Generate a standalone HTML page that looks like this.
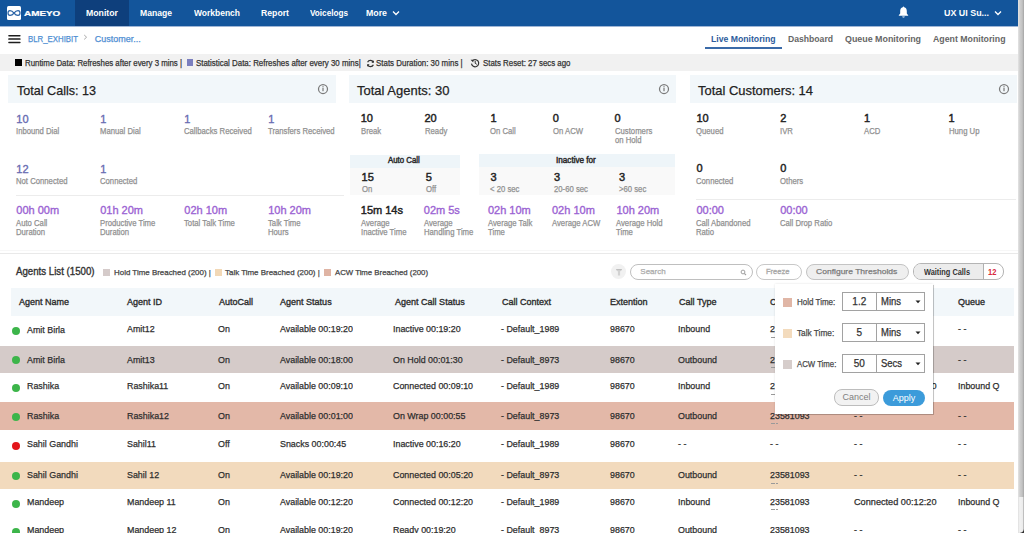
<!DOCTYPE html>
<html><head><meta charset="utf-8"><title>Ameyo Live Monitoring</title>
<style>
html,body{margin:0;padding:0;background:#fff;width:1024px;height:533px;overflow:hidden;position:relative;font-family:"Liberation Sans", sans-serif;}
.t{position:absolute;white-space:nowrap;transform-origin:0 0;}
.s{-webkit-text-stroke:0.25px currentColor;}
.m{-webkit-text-stroke:0.35px currentColor;}
.h{-webkit-text-stroke:0.45px currentColor;}
</style></head><body>
<div style="position:absolute;left:0px;top:0px;width:1018px;height:26px;background:#13559b;"></div>
<div style="position:absolute;left:75px;top:0px;width:54px;height:26px;background:#0e3f7c;"></div>
<div style="position:absolute;left:7px;top:6px;width:14px;height:14px;background:#fff;border-radius:1.5px"></div>
<svg style="position:absolute;left:7px;top:6px" width="14" height="14" viewBox="0 0 14 14"><path d="M7 7 C5.5 5 4 4.6 3 4.6 C1.7 4.6 1 5.8 1 7 C1 8.2 1.7 9.4 3 9.4 C4 9.4 5.5 9 7 7 C8.5 5 10 4.6 11 4.6 C12.3 4.6 13 5.8 13 7 C13 8.2 12.3 9.4 11 9.4 C10 9.4 8.5 9 7 7 Z" fill="none" stroke="#2a63a6" stroke-width="1.25"/></svg>
<span class="t" style="left:24.00px;top:10.79px;font-size:7.1px;line-height:7.1px;color:#fff;font-weight:700;-webkit-text-stroke:0.2px #fff;transform:scaleX(1.3953);">AMEYO</span>
<span class="t" style="left:86.00px;top:8.98px;font-size:9px;line-height:9px;color:#fff;font-weight:700;;transform:scaleX(0.9697);">Monitor</span>
<span class="t" style="left:140.00px;top:8.98px;font-size:9px;line-height:9px;color:#fff;font-weight:700;;transform:scaleX(0.9548);">Manage</span>
<span class="t" style="left:194.00px;top:8.98px;font-size:9px;line-height:9px;color:#fff;font-weight:700;;transform:scaleX(0.9418);">Workbench</span>
<span class="t" style="left:261.00px;top:8.98px;font-size:9px;line-height:9px;color:#fff;font-weight:700;;transform:scaleX(0.9655);">Report</span>
<span class="t" style="left:310.00px;top:8.98px;font-size:9px;line-height:9px;color:#fff;font-weight:700;;transform:scaleX(0.9078);">Voicelogs</span>
<span class="t" style="left:366.00px;top:8.98px;font-size:9px;line-height:9px;color:#fff;font-weight:700;;transform:scaleX(0.9760);">More</span>
<svg style="position:absolute;left:392px;top:10px" width="8" height="6" viewBox="0 0 8 6"><path d="M1 1.5 L4 4.5 L7 1.5" fill="none" stroke="#fff" stroke-width="1.3"/></svg>
<svg style="position:absolute;left:898px;top:6px" width="11" height="12" viewBox="0 0 11 12"><path d="M5.5 0.6 C5.9 0.6 6.2 0.9 6.2 1.3 C8 1.7 8.8 3.2 8.8 5 L8.8 7.6 L10.2 9.2 L10.2 9.8 L0.8 9.8 L0.8 9.2 L2.2 7.6 L2.2 5 C2.2 3.2 3 1.7 4.8 1.3 C4.8 0.9 5.1 0.6 5.5 0.6 Z M4.2 10.4 L6.8 10.4 C6.8 11.1 6.2 11.6 5.5 11.6 C4.8 11.6 4.2 11.1 4.2 10.4 Z" fill="#fff"/></svg>
<span class="t" style="left:944.00px;top:8.98px;font-size:9px;line-height:9px;color:#fff;font-weight:700;;transform:scaleX(0.9887);">UX UI Su...</span>
<svg style="position:absolute;left:994px;top:10px" width="8" height="6" viewBox="0 0 8 6"><path d="M1 1.5 L4 4.5 L7 1.5" fill="none" stroke="#fff" stroke-width="1.3"/></svg>
<div style="position:absolute;left:0px;top:26px;width:1018px;height:1px;background:#9fb6d6;"></div>
<svg style="position:absolute;left:0;top:30px" width="30" height="18" viewBox="0 30 30 18"><rect x="8.2" y="34.95" width="12.4" height="1.5" rx="0.7" fill="#1e1e1e"/><rect x="8.2" y="38.35" width="12.4" height="1.5" rx="0.7" fill="#1e1e1e"/><rect x="8.2" y="41.75" width="12.4" height="1.5" rx="0.7" fill="#1e1e1e"/></svg>
<span class="t s" style="left:28.00px;top:34.78px;font-size:9px;line-height:9px;color:#4f8fd3;font-weight:400;;transform:scaleX(0.8691);">BLR_EXHIBIT</span>
<svg style="position:absolute;left:83px;top:34px" width="5" height="7" viewBox="0 0 5 7"><path d="M1.2 1 L3.6 3.2 L1.2 5.4" fill="none" stroke="#aaa" stroke-width="1"/></svg>
<span class="t s" style="left:94.80px;top:34.78px;font-size:9px;line-height:9px;color:#4f8fd3;font-weight:400;;">Customer...</span>
<span class="t" style="left:711.30px;top:35.08px;font-size:9px;line-height:9px;color:#2d5c9c;font-weight:700;;transform:scaleX(0.9627);">Live Monitoring</span>
<div style="position:absolute;left:704.7px;top:47.3px;width:77px;height:1.8px;background:#3a6aa8;"></div>
<span class="t" style="left:787.80px;top:35.08px;font-size:9px;line-height:9px;color:#666;font-weight:700;;transform:scaleX(0.9571);">Dashboard</span>
<span class="t" style="left:845.00px;top:35.08px;font-size:9px;line-height:9px;color:#666;font-weight:700;;transform:scaleX(0.9870);">Queue Monitoring</span>
<span class="t" style="left:932.50px;top:35.08px;font-size:9px;line-height:9px;color:#666;font-weight:700;;transform:scaleX(0.9734);">Agent Monitoring</span>
<div style="position:absolute;left:0px;top:54px;width:1018px;height:16.5px;background:#f1f1f1;"></div>
<div style="position:absolute;left:15.2px;top:59px;width:6.8px;height:7px;background:#000;"></div>
<span class="t s" style="left:25.40px;top:59.40px;font-size:8.5px;line-height:8.5px;color:#333;font-weight:400;;transform:scaleX(0.9240);">Runtime Data: Refreshes after every 3 mins |</span>
<div style="position:absolute;left:186.5px;top:59px;width:6.9px;height:7px;background:#7b7fbf;"></div>
<span class="t s" style="left:196.00px;top:59.40px;font-size:8.5px;line-height:8.5px;color:#333;font-weight:400;;transform:scaleX(0.9304);">Statistical Data: Refreshes after every 30 mins|</span>
<svg style="position:absolute;left:365.5px;top:58.5px" width="9" height="9" viewBox="0 0 9 9"><path d="M7.3 3.3 A3.1 3.1 0 0 0 1.6 3.2 M1.7 5.7 A3.1 3.1 0 0 0 7.4 5.8" fill="none" stroke="#333" stroke-width="1.2"/><path d="M7.9 1.2 L7.9 3.8 L5.4 3.8 Z M1.1 7.8 L1.1 5.2 L3.6 5.2 Z" fill="#333"/></svg>
<span class="t s" style="left:376.40px;top:59.40px;font-size:8.5px;line-height:8.5px;color:#333;font-weight:400;;transform:scaleX(0.9320);">Stats Duration: 30 mins |</span>
<svg style="position:absolute;left:469.5px;top:58px" width="10" height="10" viewBox="0 0 10 10"><path d="M2.2 3 A3.6 3.6 0 1 1 1.5 5.6" fill="none" stroke="#333" stroke-width="1.2"/><path d="M0.6 1.8 L3.6 1.8 L3.2 4.4 Z" fill="#333"/><path d="M5.2 3 L5.2 5.3 L6.8 6.3" fill="none" stroke="#333" stroke-width="1"/></svg>
<span class="t s" style="left:483.00px;top:59.40px;font-size:8.5px;line-height:8.5px;color:#333;font-weight:400;;transform:scaleX(0.9259);">Stats Reset: 27 secs ago</span>
<div style="position:absolute;left:8px;top:75px;width:328px;height:28px;background:#f2f7fa;"></div>
<div style="position:absolute;left:349px;top:75px;width:327px;height:28px;background:#f2f7fa;"></div>
<div style="position:absolute;left:690px;top:75px;width:326.5px;height:28px;background:#f2f7fa;"></div>
<span class="t s" style="left:17.00px;top:83.57px;font-size:13.5px;line-height:13.5px;color:#222;font-weight:400;;transform:scaleX(0.9316);">Total Calls: 13</span>
<span class="t s" style="left:357.00px;top:83.57px;font-size:13.5px;line-height:13.5px;color:#222;font-weight:400;;transform:scaleX(0.9617);">Total Agents: 30</span>
<span class="t s" style="left:698.00px;top:83.57px;font-size:13.5px;line-height:13.5px;color:#222;font-weight:400;;transform:scaleX(0.9578);">Total Customers: 14</span>
<svg style="position:absolute;left:317px;top:83.3px" width="12" height="12" viewBox="0 0 12 12"><circle cx="6" cy="6" r="4.5" fill="none" stroke="#7a7a7a" stroke-width="1.25"/><rect x="5.4" y="5.0" width="1.2" height="3.2" fill="#777"/><rect x="5.4" y="3.2" width="1.2" height="1.2" fill="#777"/></svg>
<svg style="position:absolute;left:658px;top:83.3px" width="12" height="12" viewBox="0 0 12 12"><circle cx="6" cy="6" r="4.5" fill="none" stroke="#7a7a7a" stroke-width="1.25"/><rect x="5.4" y="5.0" width="1.2" height="3.2" fill="#777"/><rect x="5.4" y="3.2" width="1.2" height="1.2" fill="#777"/></svg>
<svg style="position:absolute;left:998.4px;top:83.3px" width="12" height="12" viewBox="0 0 12 12"><circle cx="6" cy="6" r="4.5" fill="none" stroke="#7a7a7a" stroke-width="1.25"/><rect x="5.4" y="5.0" width="1.2" height="3.2" fill="#777"/><rect x="5.4" y="3.2" width="1.2" height="1.2" fill="#777"/></svg>
<span class="t m" style="left:16.30px;top:113.69px;font-size:11px;line-height:11px;color:#686cb2;font-weight:400;;">10</span>
<span class="t s" style="left:16.30px;top:126.57px;font-size:8.3px;line-height:8.3px;color:#919191;font-weight:400;;transform:scaleX(0.9300);">Inbound Dial</span>
<span class="t m" style="left:100.20px;top:113.69px;font-size:11px;line-height:11px;color:#686cb2;font-weight:400;;">1</span>
<span class="t s" style="left:100.20px;top:126.57px;font-size:8.3px;line-height:8.3px;color:#919191;font-weight:400;;transform:scaleX(0.9300);">Manual Dial</span>
<span class="t m" style="left:184.30px;top:113.69px;font-size:11px;line-height:11px;color:#686cb2;font-weight:400;;">1</span>
<span class="t s" style="left:184.30px;top:126.57px;font-size:8.3px;line-height:8.3px;color:#919191;font-weight:400;;transform:scaleX(0.9300);">Callbacks Received</span>
<span class="t m" style="left:268.20px;top:113.69px;font-size:11px;line-height:11px;color:#686cb2;font-weight:400;;">1</span>
<span class="t s" style="left:268.20px;top:126.57px;font-size:8.3px;line-height:8.3px;color:#919191;font-weight:400;;transform:scaleX(0.9300);">Transfers Received</span>
<span class="t m" style="left:16.30px;top:163.79px;font-size:11px;line-height:11px;color:#686cb2;font-weight:400;;">12</span>
<span class="t s" style="left:16.30px;top:176.87px;font-size:8.3px;line-height:8.3px;color:#919191;font-weight:400;;transform:scaleX(0.9300);">Not Connected</span>
<span class="t m" style="left:100.20px;top:163.79px;font-size:11px;line-height:11px;color:#686cb2;font-weight:400;;">1</span>
<span class="t s" style="left:100.20px;top:176.87px;font-size:8.3px;line-height:8.3px;color:#919191;font-weight:400;;transform:scaleX(0.9300);">Connected</span>
<div style="position:absolute;left:16px;top:194.6px;width:328px;height:1px;background:#ececec;"></div>
<span class="t m" style="left:16.30px;top:205.09px;font-size:11px;line-height:11px;color:#9b63d3;font-weight:400;;">00h 00m</span>
<span class="t s" style="left:16.30px;top:218.97px;font-size:8.3px;line-height:8.3px;color:#919191;font-weight:400;;transform:scaleX(0.9300);">Auto Call</span>
<span class="t s" style="left:16.30px;top:228.37px;font-size:8.3px;line-height:8.3px;color:#919191;font-weight:400;;transform:scaleX(0.9300);">Duration</span>
<span class="t m" style="left:100.20px;top:205.09px;font-size:11px;line-height:11px;color:#9b63d3;font-weight:400;;">01h 20m</span>
<span class="t s" style="left:100.20px;top:218.97px;font-size:8.3px;line-height:8.3px;color:#919191;font-weight:400;;transform:scaleX(0.9300);">Productive Time</span>
<span class="t s" style="left:100.20px;top:228.37px;font-size:8.3px;line-height:8.3px;color:#919191;font-weight:400;;transform:scaleX(0.9300);">Duration</span>
<span class="t m" style="left:184.30px;top:205.09px;font-size:11px;line-height:11px;color:#9b63d3;font-weight:400;;">02h 10m</span>
<span class="t s" style="left:184.30px;top:218.97px;font-size:8.3px;line-height:8.3px;color:#919191;font-weight:400;;transform:scaleX(0.9300);">Total Talk Time</span>
<span class="t m" style="left:268.20px;top:205.09px;font-size:11px;line-height:11px;color:#9b63d3;font-weight:400;;">10h 20m</span>
<span class="t s" style="left:268.20px;top:218.97px;font-size:8.3px;line-height:8.3px;color:#919191;font-weight:400;;transform:scaleX(0.9300);">Talk Time</span>
<span class="t s" style="left:268.20px;top:228.37px;font-size:8.3px;line-height:8.3px;color:#919191;font-weight:400;;transform:scaleX(0.9300);">Hours</span>
<span class="t h" style="left:360.70px;top:113.49px;font-size:11px;line-height:11px;color:#232323;font-weight:400;;">10</span>
<span class="t s" style="left:360.70px;top:126.67px;font-size:8.3px;line-height:8.3px;color:#919191;font-weight:400;;transform:scaleX(0.9300);">Break</span>
<span class="t h" style="left:424.50px;top:113.49px;font-size:11px;line-height:11px;color:#232323;font-weight:400;;">20</span>
<span class="t s" style="left:424.50px;top:126.67px;font-size:8.3px;line-height:8.3px;color:#919191;font-weight:400;;transform:scaleX(0.9300);">Ready</span>
<span class="t h" style="left:490.40px;top:113.49px;font-size:11px;line-height:11px;color:#232323;font-weight:400;;">1</span>
<span class="t s" style="left:490.40px;top:126.67px;font-size:8.3px;line-height:8.3px;color:#919191;font-weight:400;;transform:scaleX(0.9300);">On Call</span>
<span class="t h" style="left:552.80px;top:113.49px;font-size:11px;line-height:11px;color:#232323;font-weight:400;;">0</span>
<span class="t s" style="left:552.80px;top:126.67px;font-size:8.3px;line-height:8.3px;color:#919191;font-weight:400;;transform:scaleX(0.9300);">On ACW</span>
<span class="t h" style="left:614.50px;top:113.49px;font-size:11px;line-height:11px;color:#232323;font-weight:400;;">0</span>
<span class="t s" style="left:614.50px;top:126.67px;font-size:8.3px;line-height:8.3px;color:#919191;font-weight:400;;transform:scaleX(0.9300);">Customers</span>
<span class="t s" style="left:614.50px;top:135.87px;font-size:8.3px;line-height:8.3px;color:#919191;font-weight:400;;transform:scaleX(0.9300);">on Hold</span>
<div style="position:absolute;left:349.8px;top:154.6px;width:110.6px;height:13.2px;background:#eef5f9;"></div>
<div style="position:absolute;left:349.8px;top:167.8px;width:110.6px;height:27.4px;background:#f9f9f9;"></div>
<span class="t h" style="left:388.20px;top:156.00px;font-size:8.5px;line-height:8.5px;color:#2a2a2a;font-weight:400;;transform:scaleX(0.9217);">Auto Call</span>
<span class="t h" style="left:361.60px;top:172.09px;font-size:11px;line-height:11px;color:#232323;font-weight:400;;">15</span>
<span class="t s" style="left:361.60px;top:184.97px;font-size:8.3px;line-height:8.3px;color:#919191;font-weight:400;;transform:scaleX(0.9300);">On</span>
<span class="t h" style="left:425.80px;top:172.09px;font-size:11px;line-height:11px;color:#232323;font-weight:400;;">5</span>
<span class="t s" style="left:425.80px;top:184.97px;font-size:8.3px;line-height:8.3px;color:#919191;font-weight:400;;transform:scaleX(0.9300);">Off</span>
<div style="position:absolute;left:478.6px;top:154.4px;width:196.5px;height:12.6px;background:#eef5f9;"></div>
<div style="position:absolute;left:478.6px;top:167px;width:196.5px;height:28.2px;background:#f9f9f9;"></div>
<span class="t h" style="left:555.60px;top:156.00px;font-size:8.5px;line-height:8.5px;color:#2a2a2a;font-weight:400;;transform:scaleX(0.9572);">Inactive for</span>
<span class="t h" style="left:490.40px;top:172.09px;font-size:11px;line-height:11px;color:#232323;font-weight:400;;">3</span>
<span class="t s" style="left:490.40px;top:184.97px;font-size:8.3px;line-height:8.3px;color:#919191;font-weight:400;;transform:scaleX(0.9300);">&lt; 20 sec</span>
<span class="t h" style="left:553.90px;top:172.09px;font-size:11px;line-height:11px;color:#232323;font-weight:400;;">3</span>
<span class="t s" style="left:553.90px;top:184.97px;font-size:8.3px;line-height:8.3px;color:#919191;font-weight:400;;transform:scaleX(0.9300);">20-60 sec</span>
<span class="t h" style="left:619.00px;top:172.09px;font-size:11px;line-height:11px;color:#232323;font-weight:400;;">3</span>
<span class="t s" style="left:619.00px;top:184.97px;font-size:8.3px;line-height:8.3px;color:#919191;font-weight:400;;transform:scaleX(0.9300);">&gt;60 sec</span>
<span class="t h" style="left:360.80px;top:204.99px;font-size:11px;line-height:11px;color:#232323;font-weight:400;;">15m 14s</span>
<span class="t s" style="left:360.80px;top:218.97px;font-size:8.3px;line-height:8.3px;color:#919191;font-weight:400;;transform:scaleX(0.9300);">Average</span>
<span class="t s" style="left:360.80px;top:228.37px;font-size:8.3px;line-height:8.3px;color:#919191;font-weight:400;;transform:scaleX(0.9300);">Inactive Time</span>
<span class="t m" style="left:423.80px;top:204.99px;font-size:11px;line-height:11px;color:#9b63d3;font-weight:400;;">02m 5s</span>
<span class="t s" style="left:423.80px;top:218.97px;font-size:8.3px;line-height:8.3px;color:#919191;font-weight:400;;transform:scaleX(0.9300);">Average</span>
<span class="t s" style="left:423.80px;top:228.37px;font-size:8.3px;line-height:8.3px;color:#919191;font-weight:400;;transform:scaleX(0.9300);">Handling Time</span>
<span class="t m" style="left:487.90px;top:204.99px;font-size:11px;line-height:11px;color:#9b63d3;font-weight:400;;">02h 10m</span>
<span class="t s" style="left:487.90px;top:218.97px;font-size:8.3px;line-height:8.3px;color:#919191;font-weight:400;;transform:scaleX(0.9300);">Average Talk</span>
<span class="t s" style="left:487.90px;top:228.37px;font-size:8.3px;line-height:8.3px;color:#919191;font-weight:400;;transform:scaleX(0.9300);">Time</span>
<span class="t m" style="left:552.00px;top:204.99px;font-size:11px;line-height:11px;color:#9b63d3;font-weight:400;;">02h 10m</span>
<span class="t s" style="left:552.00px;top:218.97px;font-size:8.3px;line-height:8.3px;color:#919191;font-weight:400;;transform:scaleX(0.9300);">Average ACW</span>
<span class="t m" style="left:616.40px;top:204.99px;font-size:11px;line-height:11px;color:#9b63d3;font-weight:400;;">10h 20m</span>
<span class="t s" style="left:616.40px;top:218.97px;font-size:8.3px;line-height:8.3px;color:#919191;font-weight:400;;transform:scaleX(0.9300);">Average Hold</span>
<span class="t s" style="left:616.40px;top:228.37px;font-size:8.3px;line-height:8.3px;color:#919191;font-weight:400;;transform:scaleX(0.9300);">Time</span>
<span class="t h" style="left:696.40px;top:113.49px;font-size:11px;line-height:11px;color:#232323;font-weight:400;;">10</span>
<span class="t s" style="left:696.40px;top:126.57px;font-size:8.3px;line-height:8.3px;color:#919191;font-weight:400;;transform:scaleX(0.9300);">Queued</span>
<span class="t h" style="left:780.20px;top:113.49px;font-size:11px;line-height:11px;color:#232323;font-weight:400;;">2</span>
<span class="t s" style="left:780.20px;top:126.57px;font-size:8.3px;line-height:8.3px;color:#919191;font-weight:400;;transform:scaleX(0.9300);">IVR</span>
<span class="t h" style="left:864.00px;top:113.49px;font-size:11px;line-height:11px;color:#232323;font-weight:400;;">1</span>
<span class="t s" style="left:864.00px;top:126.57px;font-size:8.3px;line-height:8.3px;color:#919191;font-weight:400;;transform:scaleX(0.9300);">ACD</span>
<span class="t h" style="left:948.50px;top:113.49px;font-size:11px;line-height:11px;color:#232323;font-weight:400;;">1</span>
<span class="t s" style="left:948.50px;top:126.57px;font-size:8.3px;line-height:8.3px;color:#919191;font-weight:400;;transform:scaleX(0.9300);">Hung Up</span>
<span class="t h" style="left:696.40px;top:163.29px;font-size:11px;line-height:11px;color:#232323;font-weight:400;;">0</span>
<span class="t s" style="left:696.40px;top:176.67px;font-size:8.3px;line-height:8.3px;color:#919191;font-weight:400;;transform:scaleX(0.9300);">Connected</span>
<span class="t h" style="left:780.20px;top:163.29px;font-size:11px;line-height:11px;color:#232323;font-weight:400;;">0</span>
<span class="t s" style="left:780.20px;top:176.67px;font-size:8.3px;line-height:8.3px;color:#919191;font-weight:400;;transform:scaleX(0.9300);">Others</span>
<div style="position:absolute;left:696px;top:198.5px;width:320px;height:1px;background:#ececec;"></div>
<span class="t m" style="left:696.40px;top:204.99px;font-size:11px;line-height:11px;color:#9b63d3;font-weight:400;;">00:00</span>
<span class="t s" style="left:696.40px;top:218.97px;font-size:8.3px;line-height:8.3px;color:#919191;font-weight:400;;transform:scaleX(0.9300);">Call Abandoned</span>
<span class="t s" style="left:696.40px;top:228.37px;font-size:8.3px;line-height:8.3px;color:#919191;font-weight:400;;transform:scaleX(0.9300);">Ratio</span>
<span class="t m" style="left:780.20px;top:204.99px;font-size:11px;line-height:11px;color:#9b63d3;font-weight:400;;">00:00</span>
<span class="t s" style="left:780.20px;top:218.97px;font-size:8.3px;line-height:8.3px;color:#919191;font-weight:400;;transform:scaleX(0.9300);">Call Drop Ratio</span>
<div style="position:absolute;left:0px;top:249.5px;width:1018px;height:1px;background:#f7f7f7;"></div>
<div style="position:absolute;left:0px;top:253px;width:1018px;height:1px;background:#e9e9e9;"></div>
<span class="t m" style="left:16.00px;top:266.53px;font-size:10px;line-height:10px;color:#333;font-weight:400;;transform:scaleX(0.9683);">Agents List (1500)</span>
<div style="position:absolute;left:103px;top:269px;width:7px;height:7px;background:#d5cbca;"></div>
<span class="t s" style="left:114.00px;top:268.73px;font-size:8px;line-height:8px;color:#444;font-weight:400;;transform:scaleX(0.9909);">Hold Time Breached (200) |</span>
<div style="position:absolute;left:214.5px;top:269px;width:7px;height:7px;background:#f2d8b6;"></div>
<span class="t s" style="left:225.30px;top:268.73px;font-size:8px;line-height:8px;color:#444;font-weight:400;;transform:scaleX(0.9921);">Talk Time Breached (200) |</span>
<div style="position:absolute;left:324.2px;top:269px;width:7px;height:7px;background:#dfb4a4;"></div>
<span class="t s" style="left:334.80px;top:268.73px;font-size:8px;line-height:8px;color:#444;font-weight:400;;transform:scaleX(0.9729);">ACW Time Breached (200)</span>
<div style="position:absolute;left:611px;top:264.4px;width:15px;height:15px;border-radius:50%;background:#f1f1f1"></div>
<svg style="position:absolute;left:613.5px;top:267px" width="10" height="10" viewBox="0 0 10 10"><path d="M2.2 2.2 L7.8 2.2 L7.8 2.9 L6.1 4.4 L6.1 8.6 L3.9 8.6 L3.9 4.4 L2.2 2.9 Z" fill="#d2d2d2"/><rect x="2.2" y="2.2" width="5.6" height="0.9" fill="#b9b9b9"/></svg>
<div style="position:absolute;left:629.7px;top:263.8px;width:121px;height:14px;border:1px solid #bfbfbf;border-radius:8px;background:#fff"></div>
<span class="t s" style="left:640.30px;top:268.03px;font-size:8px;line-height:8px;color:#aaa;font-weight:400;;">Search</span>
<svg style="position:absolute;left:740px;top:268.5px" width="7" height="7" viewBox="0 0 7 7"><circle cx="3" cy="3" r="1.9" fill="none" stroke="#a0a0a0" stroke-width="1"/><path d="M4.3 4.3 L6 6" stroke="#a0a0a0" stroke-width="1.1"/></svg>
<div style="position:absolute;left:756.3px;top:263.8px;width:43.3px;height:14.4px;border:1px solid #c8c8c8;border-radius:8px;background:#fff"></div>
<span class="t m" style="left:766.40px;top:268.23px;font-size:8px;line-height:8px;color:#aaa;font-weight:400;;transform:scaleX(0.9395);">Freeze</span>
<div style="position:absolute;left:805.5px;top:263.8px;width:101.9px;height:14.4px;border:1px solid #c4c4c4;border-radius:8px;background:#efefef"></div>
<span class="t s" style="left:815.60px;top:268.43px;font-size:8px;line-height:8px;color:#7a7a7a;font-weight:400;;transform:scaleX(1.0649);">Configure Thresholds</span>
<div style="position:absolute;left:913px;top:263.4px;width:88.5px;height:15px;border:1px solid #b4b4b4;border-radius:8px;background:#fff;overflow:hidden"><div style="position:absolute;left:0;top:0;width:69px;height:15px;background:#ececec;border-right:1px solid #b0b0b0"></div></div>
<span class="t" style="left:923.60px;top:267.60px;font-size:8.5px;line-height:8.5px;color:#333;font-weight:700;;transform:scaleX(0.8669);">Waiting Calls</span>
<span class="t" style="left:987.80px;top:267.60px;font-size:8.5px;line-height:8.5px;color:#d82a40;font-weight:700;;transform:scaleX(0.8871);">12</span>
<div style="position:absolute;left:11px;top:287.7px;width:1003px;height:28px;background:#f2f7fa;"></div>
<span class="t m" style="left:18.90px;top:297.07px;font-size:9.6px;line-height:9.6px;color:#2b2b2b;font-weight:400;;transform:scaleX(0.9400);">Agent Name</span>
<span class="t m" style="left:126.90px;top:297.07px;font-size:9.6px;line-height:9.6px;color:#2b2b2b;font-weight:400;;transform:scaleX(0.9400);">Agent ID</span>
<span class="t m" style="left:218.75px;top:297.07px;font-size:9.6px;line-height:9.6px;color:#2b2b2b;font-weight:400;;transform:scaleX(0.9400);">AutoCall</span>
<span class="t m" style="left:279.70px;top:297.07px;font-size:9.6px;line-height:9.6px;color:#2b2b2b;font-weight:400;;transform:scaleX(0.9400);">Agent Status</span>
<span class="t m" style="left:395.30px;top:297.07px;font-size:9.6px;line-height:9.6px;color:#2b2b2b;font-weight:400;;transform:scaleX(0.9400);">Agent Call Status</span>
<span class="t m" style="left:501.50px;top:297.07px;font-size:9.6px;line-height:9.6px;color:#2b2b2b;font-weight:400;;transform:scaleX(0.9400);">Call Context</span>
<span class="t m" style="left:610.00px;top:297.07px;font-size:9.6px;line-height:9.6px;color:#2b2b2b;font-weight:400;;transform:scaleX(0.9400);">Extention</span>
<span class="t m" style="left:678.80px;top:297.07px;font-size:9.6px;line-height:9.6px;color:#2b2b2b;font-weight:400;;transform:scaleX(0.9400);">Call Type</span>
<span class="t m" style="left:770.40px;top:297.07px;font-size:9.6px;line-height:9.6px;color:#2b2b2b;font-weight:400;;transform:scaleX(0.9400);">Customer No</span>
<span class="t m" style="left:852.00px;top:297.07px;font-size:9.6px;line-height:9.6px;color:#2b2b2b;font-weight:400;;transform:scaleX(0.9400);">Customer Status</span>
<span class="t m" style="left:958.40px;top:297.07px;font-size:9.6px;line-height:9.6px;color:#2b2b2b;font-weight:400;;transform:scaleX(0.9400);">Queue</span>
<div style="position:absolute;left:11.9px;top:326.6px;width:8px;height:8px;border-radius:50%;background:#3cb54a"></div>
<span class="t s" style="left:26.80px;top:324.96px;font-size:9.5px;line-height:9.5px;color:#2e2e2e;font-weight:400;;transform:scaleX(0.9350);">Amit Birla</span>
<span class="t s" style="left:126.60px;top:323.76px;font-size:9.5px;line-height:9.5px;color:#2e2e2e;font-weight:400;;transform:scaleX(0.9350);">Amit12</span>
<span class="t s" style="left:218.40px;top:323.76px;font-size:9.5px;line-height:9.5px;color:#2e2e2e;font-weight:400;;transform:scaleX(0.9350);">On</span>
<span class="t s" style="left:279.70px;top:323.76px;font-size:9.5px;line-height:9.5px;color:#2e2e2e;font-weight:400;;transform:scaleX(0.9350);">Available 00:19:20</span>
<span class="t s" style="left:393.00px;top:323.76px;font-size:9.5px;line-height:9.5px;color:#2e2e2e;font-weight:400;;transform:scaleX(0.9350);">Inactive 00:19:20</span>
<span class="t s" style="left:501.10px;top:323.76px;font-size:9.5px;line-height:9.5px;color:#2e2e2e;font-weight:400;;transform:scaleX(0.9350);">- Default_1989</span>
<span class="t s" style="left:609.50px;top:323.76px;font-size:9.5px;line-height:9.5px;color:#2e2e2e;font-weight:400;;transform:scaleX(0.9350);">98670</span>
<span class="t s" style="left:678.40px;top:323.76px;font-size:9.5px;line-height:9.5px;color:#2e2e2e;font-weight:400;;transform:scaleX(0.9350);">Inbound</span>
<span class="t s" style="left:770.40px;top:323.76px;font-size:9.5px;line-height:9.5px;color:#2e2e2e;font-weight:400;;transform:scaleX(0.9350);">23581093</span>
<div style="position:absolute;left:771px;top:337.3px;width:4px;height:0.7px;background:#9a9a9a;"></div>
<div style="position:absolute;left:776px;top:337.3px;width:1.5px;height:0.7px;background:#9a9a9a;"></div>
<span class="t s" style="left:853.50px;top:323.76px;font-size:9.5px;line-height:9.5px;color:#2e2e2e;font-weight:400;;transform:scaleX(0.9350);">- -</span>
<span class="t s" style="left:958.40px;top:323.76px;font-size:9.5px;line-height:9.5px;color:#2e2e2e;font-weight:400;;transform:scaleX(0.9350);">- -</span>
<div style="position:absolute;left:0px;top:346px;width:1014px;height:27px;background:#d5cbc9;"></div>
<div style="position:absolute;left:11.9px;top:356px;width:8px;height:8px;border-radius:50%;background:#3cb54a"></div>
<span class="t s" style="left:26.80px;top:354.56px;font-size:9.5px;line-height:9.5px;color:#2e2e2e;font-weight:400;;transform:scaleX(0.9350);">Amit Birla</span>
<span class="t s" style="left:126.60px;top:354.56px;font-size:9.5px;line-height:9.5px;color:#2e2e2e;font-weight:400;;transform:scaleX(0.9350);">Amit13</span>
<span class="t s" style="left:218.40px;top:354.56px;font-size:9.5px;line-height:9.5px;color:#2e2e2e;font-weight:400;;transform:scaleX(0.9350);">On</span>
<span class="t s" style="left:279.70px;top:354.56px;font-size:9.5px;line-height:9.5px;color:#2e2e2e;font-weight:400;;transform:scaleX(0.9350);">Available 00:18:00</span>
<span class="t s" style="left:393.00px;top:354.56px;font-size:9.5px;line-height:9.5px;color:#2e2e2e;font-weight:400;;transform:scaleX(0.9350);">On Hold 00:01:30</span>
<span class="t s" style="left:501.10px;top:354.56px;font-size:9.5px;line-height:9.5px;color:#2e2e2e;font-weight:400;;transform:scaleX(0.9350);">- Default_8973</span>
<span class="t s" style="left:609.50px;top:354.56px;font-size:9.5px;line-height:9.5px;color:#2e2e2e;font-weight:400;;transform:scaleX(0.9350);">98670</span>
<span class="t s" style="left:678.40px;top:354.56px;font-size:9.5px;line-height:9.5px;color:#2e2e2e;font-weight:400;;transform:scaleX(0.9350);">Outbound</span>
<span class="t s" style="left:770.40px;top:354.56px;font-size:9.5px;line-height:9.5px;color:#2e2e2e;font-weight:400;;transform:scaleX(0.9350);">23581093</span>
<div style="position:absolute;left:771px;top:366.90000000000003px;width:4px;height:0.7px;background:#9a9a9a;"></div>
<div style="position:absolute;left:776px;top:366.90000000000003px;width:1.5px;height:0.7px;background:#9a9a9a;"></div>
<span class="t s" style="left:853.50px;top:354.56px;font-size:9.5px;line-height:9.5px;color:#2e2e2e;font-weight:400;;transform:scaleX(0.9350);">- -</span>
<span class="t s" style="left:958.40px;top:354.56px;font-size:9.5px;line-height:9.5px;color:#2e2e2e;font-weight:400;;transform:scaleX(0.9350);">- -</span>
<div style="position:absolute;left:11.9px;top:384px;width:8px;height:8px;border-radius:50%;background:#3cb54a"></div>
<span class="t s" style="left:26.80px;top:381.46px;font-size:9.5px;line-height:9.5px;color:#2e2e2e;font-weight:400;;transform:scaleX(0.9350);">Rashika</span>
<span class="t s" style="left:126.60px;top:381.46px;font-size:9.5px;line-height:9.5px;color:#2e2e2e;font-weight:400;;transform:scaleX(0.9350);">Rashika11</span>
<span class="t s" style="left:218.40px;top:381.46px;font-size:9.5px;line-height:9.5px;color:#2e2e2e;font-weight:400;;transform:scaleX(0.9350);">On</span>
<span class="t s" style="left:279.70px;top:381.46px;font-size:9.5px;line-height:9.5px;color:#2e2e2e;font-weight:400;;transform:scaleX(0.9350);">Available 00:09:10</span>
<span class="t s" style="left:393.00px;top:381.46px;font-size:9.5px;line-height:9.5px;color:#2e2e2e;font-weight:400;;transform:scaleX(0.9350);">Connected 00:09:10</span>
<span class="t s" style="left:501.10px;top:381.46px;font-size:9.5px;line-height:9.5px;color:#2e2e2e;font-weight:400;;transform:scaleX(0.9350);">- Default_1989</span>
<span class="t s" style="left:609.50px;top:381.46px;font-size:9.5px;line-height:9.5px;color:#2e2e2e;font-weight:400;;transform:scaleX(0.9350);">98670</span>
<span class="t s" style="left:678.40px;top:381.46px;font-size:9.5px;line-height:9.5px;color:#2e2e2e;font-weight:400;;transform:scaleX(0.9350);">Inbound</span>
<span class="t s" style="left:770.40px;top:381.46px;font-size:9.5px;line-height:9.5px;color:#2e2e2e;font-weight:400;;transform:scaleX(0.9350);">23581093</span>
<div style="position:absolute;left:771px;top:393.8px;width:4px;height:0.7px;background:#9a9a9a;"></div>
<div style="position:absolute;left:776px;top:393.8px;width:1.5px;height:0.7px;background:#9a9a9a;"></div>
<span class="t s" style="left:853.50px;top:381.46px;font-size:9.5px;line-height:9.5px;color:#2e2e2e;font-weight:400;;transform:scaleX(0.9640);">Connected 00:09:10</span>
<span class="t s" style="left:958.40px;top:381.46px;font-size:9.5px;line-height:9.5px;color:#2e2e2e;font-weight:400;;transform:scaleX(0.9350);">Inbound Q</span>
<div style="position:absolute;left:0px;top:401.5px;width:1014px;height:28px;background:#e3b8a8;"></div>
<div style="position:absolute;left:11.9px;top:413px;width:8px;height:8px;border-radius:50%;background:#3cb54a"></div>
<span class="t s" style="left:26.80px;top:410.76px;font-size:9.5px;line-height:9.5px;color:#2e2e2e;font-weight:400;;transform:scaleX(0.9350);">Rashika</span>
<span class="t s" style="left:126.60px;top:410.76px;font-size:9.5px;line-height:9.5px;color:#2e2e2e;font-weight:400;;transform:scaleX(0.9350);">Rashika12</span>
<span class="t s" style="left:218.40px;top:410.76px;font-size:9.5px;line-height:9.5px;color:#2e2e2e;font-weight:400;;transform:scaleX(0.9350);">On</span>
<span class="t s" style="left:279.70px;top:410.76px;font-size:9.5px;line-height:9.5px;color:#2e2e2e;font-weight:400;;transform:scaleX(0.9350);">Available 00:01:00</span>
<span class="t s" style="left:393.00px;top:410.76px;font-size:9.5px;line-height:9.5px;color:#2e2e2e;font-weight:400;;transform:scaleX(0.9350);">On Wrap 00:00:55</span>
<span class="t s" style="left:501.10px;top:410.76px;font-size:9.5px;line-height:9.5px;color:#2e2e2e;font-weight:400;;transform:scaleX(0.9350);">- Default_8973</span>
<span class="t s" style="left:609.50px;top:410.76px;font-size:9.5px;line-height:9.5px;color:#2e2e2e;font-weight:400;;transform:scaleX(0.9350);">98670</span>
<span class="t s" style="left:678.40px;top:410.76px;font-size:9.5px;line-height:9.5px;color:#2e2e2e;font-weight:400;;transform:scaleX(0.9350);">Outbound</span>
<span class="t s" style="left:770.40px;top:410.76px;font-size:9.5px;line-height:9.5px;color:#2e2e2e;font-weight:400;;transform:scaleX(0.9350);">23581093</span>
<div style="position:absolute;left:771px;top:423.1px;width:4px;height:0.7px;background:#9a9a9a;"></div>
<div style="position:absolute;left:776px;top:423.1px;width:1.5px;height:0.7px;background:#9a9a9a;"></div>
<span class="t s" style="left:853.50px;top:410.76px;font-size:9.5px;line-height:9.5px;color:#2e2e2e;font-weight:400;;transform:scaleX(0.9350);">- -</span>
<span class="t s" style="left:958.40px;top:410.76px;font-size:9.5px;line-height:9.5px;color:#2e2e2e;font-weight:400;;transform:scaleX(0.9350);">- -</span>
<div style="position:absolute;left:11.9px;top:442px;width:8px;height:8px;border-radius:50%;background:#e3161b"></div>
<span class="t s" style="left:26.80px;top:439.46px;font-size:9.5px;line-height:9.5px;color:#2e2e2e;font-weight:400;;transform:scaleX(0.9350);">Sahil Gandhi</span>
<span class="t s" style="left:126.60px;top:439.46px;font-size:9.5px;line-height:9.5px;color:#2e2e2e;font-weight:400;;transform:scaleX(0.9350);">Sahil11</span>
<span class="t s" style="left:218.40px;top:439.46px;font-size:9.5px;line-height:9.5px;color:#2e2e2e;font-weight:400;;transform:scaleX(0.9350);">Off</span>
<span class="t s" style="left:279.70px;top:439.46px;font-size:9.5px;line-height:9.5px;color:#2e2e2e;font-weight:400;;transform:scaleX(0.9350);">Snacks 00:00:45</span>
<span class="t s" style="left:393.00px;top:439.46px;font-size:9.5px;line-height:9.5px;color:#2e2e2e;font-weight:400;;transform:scaleX(0.9350);">Inactive 00:16:20</span>
<span class="t s" style="left:501.10px;top:439.46px;font-size:9.5px;line-height:9.5px;color:#2e2e2e;font-weight:400;;transform:scaleX(0.9350);">- Default_1989</span>
<span class="t s" style="left:609.50px;top:439.46px;font-size:9.5px;line-height:9.5px;color:#2e2e2e;font-weight:400;;transform:scaleX(0.9350);">98670</span>
<span class="t s" style="left:678.40px;top:439.46px;font-size:9.5px;line-height:9.5px;color:#2e2e2e;font-weight:400;;transform:scaleX(0.9350);">- -</span>
<span class="t s" style="left:770.40px;top:439.46px;font-size:9.5px;line-height:9.5px;color:#2e2e2e;font-weight:400;;transform:scaleX(0.9350);">- -</span>
<span class="t s" style="left:853.50px;top:439.46px;font-size:9.5px;line-height:9.5px;color:#2e2e2e;font-weight:400;;transform:scaleX(0.9350);">- -</span>
<span class="t s" style="left:958.40px;top:439.46px;font-size:9.5px;line-height:9.5px;color:#2e2e2e;font-weight:400;;transform:scaleX(0.9350);">- -</span>
<div style="position:absolute;left:0px;top:461.8px;width:1014px;height:27.7px;background:#f2dabd;"></div>
<div style="position:absolute;left:11.9px;top:472px;width:8px;height:8px;border-radius:50%;background:#3cb54a"></div>
<span class="t s" style="left:26.80px;top:470.26px;font-size:9.5px;line-height:9.5px;color:#2e2e2e;font-weight:400;;transform:scaleX(0.9350);">Sahil Gandhi</span>
<span class="t s" style="left:126.60px;top:470.26px;font-size:9.5px;line-height:9.5px;color:#2e2e2e;font-weight:400;;transform:scaleX(0.9350);">Sahil 12</span>
<span class="t s" style="left:218.40px;top:470.26px;font-size:9.5px;line-height:9.5px;color:#2e2e2e;font-weight:400;;transform:scaleX(0.9350);">On</span>
<span class="t s" style="left:279.70px;top:470.26px;font-size:9.5px;line-height:9.5px;color:#2e2e2e;font-weight:400;;transform:scaleX(0.9350);">Available 00:19:20</span>
<span class="t s" style="left:393.00px;top:470.26px;font-size:9.5px;line-height:9.5px;color:#2e2e2e;font-weight:400;;transform:scaleX(0.9350);">Connected 00:05:20</span>
<span class="t s" style="left:501.10px;top:470.26px;font-size:9.5px;line-height:9.5px;color:#2e2e2e;font-weight:400;;transform:scaleX(0.9350);">- Default_8973</span>
<span class="t s" style="left:609.50px;top:470.26px;font-size:9.5px;line-height:9.5px;color:#2e2e2e;font-weight:400;;transform:scaleX(0.9350);">98670</span>
<span class="t s" style="left:678.40px;top:470.26px;font-size:9.5px;line-height:9.5px;color:#2e2e2e;font-weight:400;;transform:scaleX(0.9350);">Outbound</span>
<span class="t s" style="left:770.40px;top:470.26px;font-size:9.5px;line-height:9.5px;color:#2e2e2e;font-weight:400;;transform:scaleX(0.9350);">23581093</span>
<div style="position:absolute;left:771px;top:482.6px;width:4px;height:0.7px;background:#9a9a9a;"></div>
<div style="position:absolute;left:776px;top:482.6px;width:1.5px;height:0.7px;background:#9a9a9a;"></div>
<span class="t s" style="left:853.50px;top:470.26px;font-size:9.5px;line-height:9.5px;color:#2e2e2e;font-weight:400;;transform:scaleX(0.9350);">- -</span>
<span class="t s" style="left:958.40px;top:470.26px;font-size:9.5px;line-height:9.5px;color:#2e2e2e;font-weight:400;;transform:scaleX(0.9350);">- -</span>
<div style="position:absolute;left:11.9px;top:499.7px;width:8px;height:8px;border-radius:50%;background:#3cb54a"></div>
<span class="t s" style="left:26.80px;top:496.96px;font-size:9.5px;line-height:9.5px;color:#2e2e2e;font-weight:400;;transform:scaleX(0.9350);">Mandeep</span>
<span class="t s" style="left:126.60px;top:496.96px;font-size:9.5px;line-height:9.5px;color:#2e2e2e;font-weight:400;;transform:scaleX(0.9350);">Mandeep 11</span>
<span class="t s" style="left:218.40px;top:496.96px;font-size:9.5px;line-height:9.5px;color:#2e2e2e;font-weight:400;;transform:scaleX(0.9350);">On</span>
<span class="t s" style="left:279.70px;top:496.96px;font-size:9.5px;line-height:9.5px;color:#2e2e2e;font-weight:400;;transform:scaleX(0.9350);">Available 00:12:20</span>
<span class="t s" style="left:393.00px;top:496.96px;font-size:9.5px;line-height:9.5px;color:#2e2e2e;font-weight:400;;transform:scaleX(0.9350);">Connected 00:12:20</span>
<span class="t s" style="left:501.10px;top:496.96px;font-size:9.5px;line-height:9.5px;color:#2e2e2e;font-weight:400;;transform:scaleX(0.9350);">- Default_1989</span>
<span class="t s" style="left:609.50px;top:496.96px;font-size:9.5px;line-height:9.5px;color:#2e2e2e;font-weight:400;;transform:scaleX(0.9350);">98670</span>
<span class="t s" style="left:678.40px;top:496.96px;font-size:9.5px;line-height:9.5px;color:#2e2e2e;font-weight:400;;transform:scaleX(0.9350);">Inbound</span>
<span class="t s" style="left:770.40px;top:496.96px;font-size:9.5px;line-height:9.5px;color:#2e2e2e;font-weight:400;;transform:scaleX(0.9350);">23581093</span>
<div style="position:absolute;left:771px;top:509.3px;width:4px;height:0.7px;background:#9a9a9a;"></div>
<div style="position:absolute;left:776px;top:509.3px;width:1.5px;height:0.7px;background:#9a9a9a;"></div>
<span class="t s" style="left:853.50px;top:496.96px;font-size:9.5px;line-height:9.5px;color:#2e2e2e;font-weight:400;;transform:scaleX(0.9640);">Connected 00:12:20</span>
<span class="t s" style="left:958.40px;top:496.96px;font-size:9.5px;line-height:9.5px;color:#2e2e2e;font-weight:400;;transform:scaleX(0.9350);">Inbound Q</span>
<div style="position:absolute;left:11.9px;top:527.6px;width:8px;height:8px;border-radius:50%;background:#3cb54a"></div>
<span class="t s" style="left:26.80px;top:525.46px;font-size:9.5px;line-height:9.5px;color:#2e2e2e;font-weight:400;;transform:scaleX(0.9350);">Mandeep</span>
<span class="t s" style="left:126.60px;top:525.46px;font-size:9.5px;line-height:9.5px;color:#2e2e2e;font-weight:400;;transform:scaleX(0.9350);">Mandeep 12</span>
<span class="t s" style="left:218.40px;top:525.46px;font-size:9.5px;line-height:9.5px;color:#2e2e2e;font-weight:400;;transform:scaleX(0.9350);">On</span>
<span class="t s" style="left:279.70px;top:525.46px;font-size:9.5px;line-height:9.5px;color:#2e2e2e;font-weight:400;;transform:scaleX(0.9350);">Available 00:19:20</span>
<span class="t s" style="left:393.00px;top:525.46px;font-size:9.5px;line-height:9.5px;color:#2e2e2e;font-weight:400;;transform:scaleX(0.9350);">Ready 00:19:20</span>
<span class="t s" style="left:501.10px;top:525.46px;font-size:9.5px;line-height:9.5px;color:#2e2e2e;font-weight:400;;transform:scaleX(0.9350);">- Default_8973</span>
<span class="t s" style="left:609.50px;top:525.46px;font-size:9.5px;line-height:9.5px;color:#2e2e2e;font-weight:400;;transform:scaleX(0.9350);">98670</span>
<span class="t s" style="left:678.40px;top:525.46px;font-size:9.5px;line-height:9.5px;color:#2e2e2e;font-weight:400;;transform:scaleX(0.9350);">Outbound</span>
<span class="t s" style="left:770.40px;top:525.46px;font-size:9.5px;line-height:9.5px;color:#2e2e2e;font-weight:400;;transform:scaleX(0.9350);">23581093</span>
<div style="position:absolute;left:771px;top:537.8px;width:4px;height:0.7px;background:#9a9a9a;"></div>
<div style="position:absolute;left:776px;top:537.8px;width:1.5px;height:0.7px;background:#9a9a9a;"></div>
<span class="t s" style="left:853.50px;top:525.46px;font-size:9.5px;line-height:9.5px;color:#2e2e2e;font-weight:400;;transform:scaleX(0.9350);">- -</span>
<span class="t s" style="left:958.40px;top:525.46px;font-size:9.5px;line-height:9.5px;color:#2e2e2e;font-weight:400;;transform:scaleX(0.9350);">- -</span>
<div style="position:absolute;left:775px;top:284.4px;width:158px;height:130px;background:#fff;box-shadow:1px 1px 0 rgba(0,0,0,0.2),0 0 2px rgba(0,0,0,0.12)"></div>
<div style="position:absolute;left:782.5px;top:297.55px;width:9.5px;height:9.5px;background:#e0b6a6;"></div>
<span class="t s" style="left:796.90px;top:297.97px;font-size:8.3px;line-height:8.3px;color:#4a4a4a;font-weight:400;;transform:scaleX(0.9658);">Hold Time:</span>
<div style="position:absolute;left:842.3px;top:292.3px;width:81px;height:17px;border:1px solid #a2a2a2;background:#fff"></div>
<div style="position:absolute;left:876.2px;top:292.3px;width:1px;height:19px;background:#a2a2a2;"></div>
<span class="t s" style="left:852.35px;top:296.73px;font-size:10px;line-height:10px;color:#333;font-weight:400;;">1.2</span>
<span class="t s" style="left:880.90px;top:296.73px;font-size:10px;line-height:10px;color:#333;font-weight:400;;transform:scaleX(0.9500);">Mins</span>
<svg style="position:absolute;left:915px;top:300.3px" width="6" height="4" viewBox="0 0 6 4"><path d="M0.5 0.5 L5.5 0.5 L3 3.2 Z" fill="#222"/></svg>
<div style="position:absolute;left:782.5px;top:328.75px;width:9.5px;height:9.5px;background:#f3dbbd;"></div>
<span class="t s" style="left:796.90px;top:329.17px;font-size:8.3px;line-height:8.3px;color:#4a4a4a;font-weight:400;;">Talk Time:</span>
<div style="position:absolute;left:842.3px;top:323.3px;width:81px;height:17px;border:1px solid #a2a2a2;background:#fff"></div>
<div style="position:absolute;left:876.2px;top:323.3px;width:1px;height:19px;background:#a2a2a2;"></div>
<span class="t s" style="left:856.52px;top:327.73px;font-size:10px;line-height:10px;color:#333;font-weight:400;;">5</span>
<span class="t s" style="left:880.90px;top:327.73px;font-size:10px;line-height:10px;color:#333;font-weight:400;;transform:scaleX(0.9500);">Mins</span>
<svg style="position:absolute;left:915px;top:331.3px" width="6" height="4" viewBox="0 0 6 4"><path d="M0.5 0.5 L5.5 0.5 L3 3.2 Z" fill="#222"/></svg>
<div style="position:absolute;left:782.5px;top:359.95px;width:9.5px;height:9.5px;background:#d6cdcb;"></div>
<span class="t s" style="left:796.90px;top:360.37px;font-size:8.3px;line-height:8.3px;color:#4a4a4a;font-weight:400;;transform:scaleX(0.9368);">ACW Time:</span>
<div style="position:absolute;left:842.3px;top:354.3px;width:81px;height:17px;border:1px solid #a2a2a2;background:#fff"></div>
<div style="position:absolute;left:876.2px;top:354.3px;width:1px;height:19px;background:#a2a2a2;"></div>
<span class="t s" style="left:853.74px;top:358.73px;font-size:10px;line-height:10px;color:#333;font-weight:400;;">50</span>
<span class="t s" style="left:880.90px;top:358.73px;font-size:10px;line-height:10px;color:#333;font-weight:400;;transform:scaleX(0.9500);">Secs</span>
<svg style="position:absolute;left:915px;top:362.3px" width="6" height="4" viewBox="0 0 6 4"><path d="M0.5 0.5 L5.5 0.5 L3 3.2 Z" fill="#222"/></svg>
<div style="position:absolute;left:834px;top:389.3px;width:43.2px;height:14.5px;border:1px solid #bdbdbd;border-radius:8px;background:#f2f2f2"></div>
<span class="t" style="left:842.59px;top:393.38px;font-size:9px;line-height:9px;color:#808080;font-weight:400;;">Cancel</span>
<div style="position:absolute;left:883px;top:390px;width:42px;height:15.8px;border-radius:8px;background:#3c9bda"></div>
<span class="t" style="left:892.74px;top:393.58px;font-size:9px;line-height:9px;color:#fff;font-weight:400;;">Apply</span>
<div style="position:absolute;left:1017.6px;top:0px;width:6.4px;height:497px;background:linear-gradient(to right,#e4e4e4,#cdcdcd 35%,#c2c2c2 70%,#a4a4a4);"></div>
<div style="position:absolute;left:1017.6px;top:497px;width:6.4px;height:36px;background:linear-gradient(to right,#dedede,#f2f2f2 30%,#ececec 75%,#a8a8a8);"></div>
<svg style="position:absolute;left:1016px;top:524px" width="8" height="9" viewBox="0 0 8 9"><path d="M8 5 L8 9 L3.5 9 Q7.5 8.5 8 5 Z" fill="#333"/></svg>
</body></html>
